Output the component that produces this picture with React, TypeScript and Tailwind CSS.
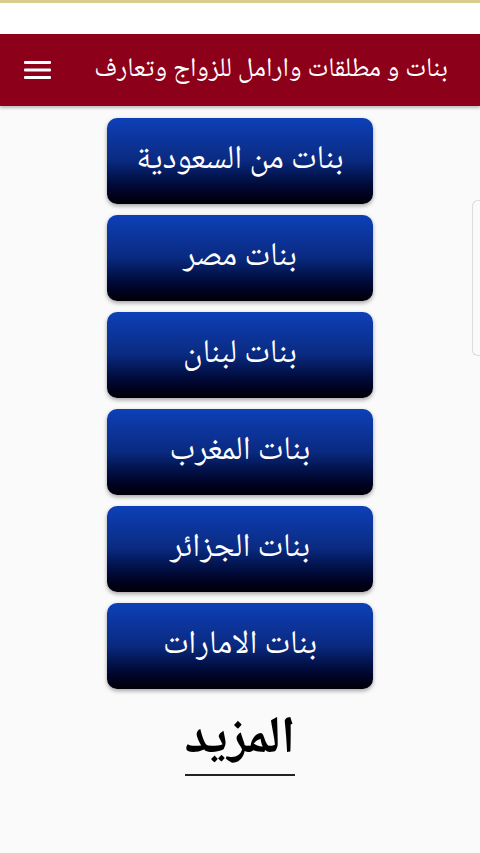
import React from "react";

const items = [
  "بنات من السعودية",
  "بنات مصر",
  "بنات لبنان",
  "بنات المغرب",
  "بنات الجزائر",
  "بنات الامارات",
];

export default function App() {
  return (
    <div className="relative w-[480px] h-[853px] overflow-hidden bg-[#fafafa] [font-family:'Noto_Naskh_Arabic','Noto_Sans_Arabic','DejaVu_Sans',sans-serif]">
      <div className="h-[3px] bg-[#d9cc8c]" />
      <div className="h-[31px] bg-white" />
      <header className="h-[72px] bg-[#8c0019] flex items-center justify-between pl-[24px] pr-[32px] shadow-[0_2px_3px_rgba(0,0,0,0.25)]">
        <svg width="27" height="18" viewBox="0 0 27 18">
          <rect x="0" y="0" width="27" height="3" rx="1" fill="#fff" />
          <rect x="0" y="7.5" width="27" height="3" rx="1" fill="#fff" />
          <rect x="0" y="15" width="27" height="3" rx="1" fill="#fff" />
        </svg>
        <div dir="rtl" className="text-white text-[26.8px] leading-none">
          بنات و مطلقات وارامل للزواج وتعارف
        </div>
      </header>
      <main className="flex flex-col items-center pt-[12px] gap-[11px]">
        {items.map((t) => (
          <button
            key={t}
            dir="rtl"
            className="w-[266px] h-[86px] rounded-[10px] bg-gradient-to-b from-[#0d40b8] via-[#0a2a80] to-[#000008] text-white text-[33px] leading-none flex items-center justify-center shadow-[0_2px_4px_rgba(0,0,0,0.35)]"
          >
            {t}
          </button>
        ))}
        <div className="mt-[11px] flex flex-col items-center">
          <div dir="rtl" className="text-black text-[52px] font-bold leading-[60px]">
            المزيد
          </div>
          <div className="mt-[3px] w-[110px] h-[2px] bg-[#222]" />
        </div>
      </main>
      <div className="absolute right-0 top-[200px] w-[8px] h-[156px] rounded-l-[6px] border border-r-0 border-[#dcdcdc] bg-[#fafafa]" />
    </div>
  );
}
